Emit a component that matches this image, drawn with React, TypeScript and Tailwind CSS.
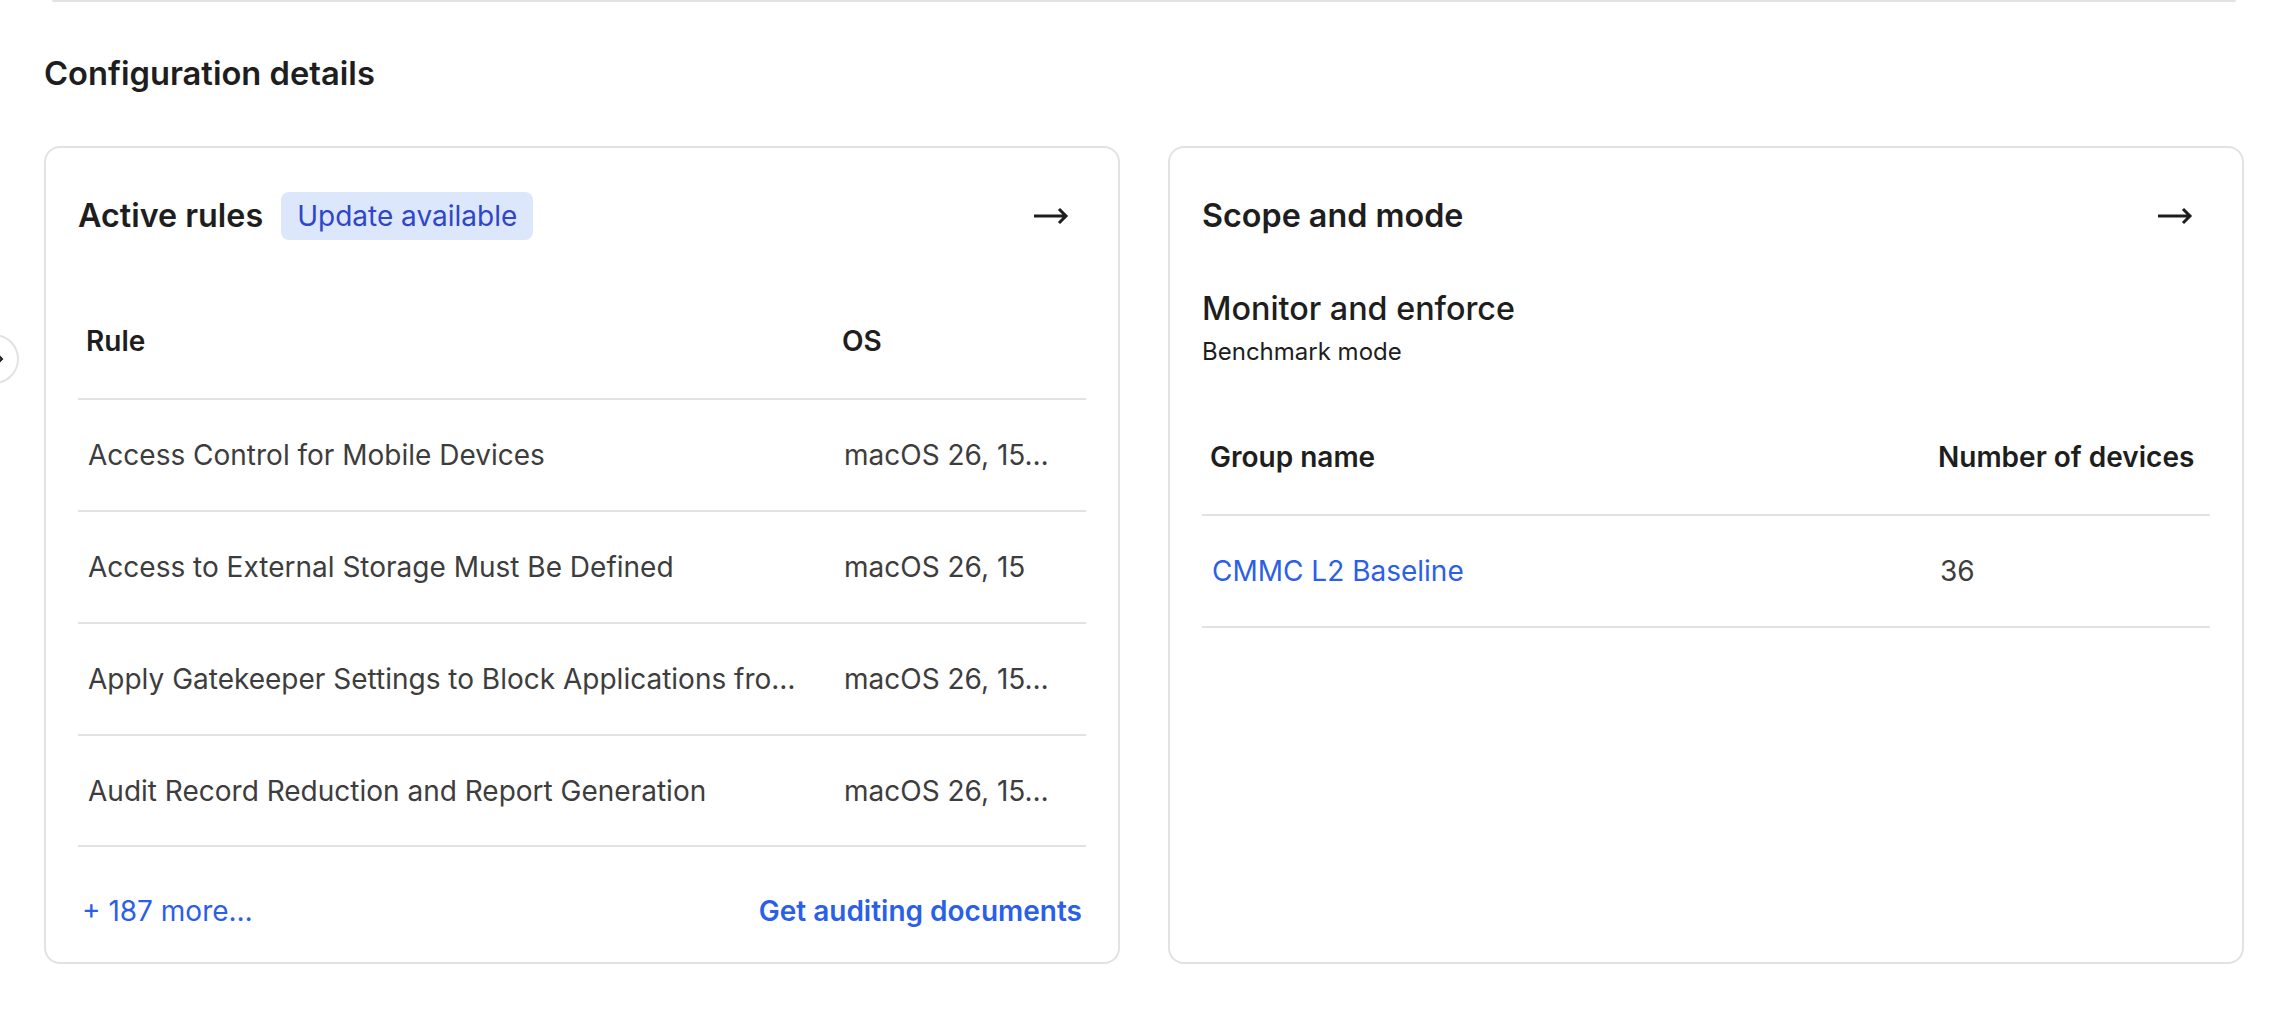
const rules = [
  { name: "Access Control for Mobile Devices", os: "macOS 26, 15…" },
  { name: "Access to External Storage Must Be Defined", os: "macOS 26, 15" },
  { name: "Apply Gatekeeper Settings to Block Applications fro…", os: "macOS 26, 15…" },
  { name: "Audit Record Reduction and Report Generation", os: "macOS 26, 15…" },
];

function ArrowRight() {
  return (
    <svg width="36" height="18" viewBox="0 0 36 18" fill="none" className="text-[#1e1e1e]">
      <path d="M1 9H33M26 2L33 9L26 16" stroke="currentColor" strokeWidth="3" />
    </svg>
  );
}

function CardHeader({ title, badge }: { title: string; badge?: string }) {
  return (
    <div className="flex h-[48px] items-center justify-between">
      <div className="flex items-center gap-[17px]">
        <h3 className="text-[32.3px] font-semibold text-[#1e1e1e]">{title}</h3>
        {badge && (
          <span className="ml-[1px] flex h-[48px] items-center rounded-[8px] bg-[#dde7fc] px-[16px] text-[28px] text-[#2f46c8]">
            {badge}
          </span>
        )}
      </div>
      <button className="mr-[17px] flex items-center">
        <ArrowRight />
      </button>
    </div>
  );
}

export default function App() {
  return (
    <div className="relative h-[1014px] w-[2282px] overflow-hidden bg-white font-['Inter',sans-serif]">
      <div className="ml-[52px] h-[2px] w-[2184px] rounded-b-[8px] bg-[#e2e2e2]" />

      {/* collapsed side nav toggle */}
      <button className="absolute left-[-31px] top-[334px] flex h-[50px] w-[50px] items-center justify-center rounded-full border-2 border-[#e2e2e2] bg-white pl-[12px]">
        <svg width="8" height="12" viewBox="0 0 8 12" fill="none" className="shrink-0">
          <path d="M1 1L6 6L1 11" stroke="#1e1e1e" strokeWidth="2" />
        </svg>
      </button>

      <div className="px-[44px]">
        <h2 className="mt-[51px] h-[40px] text-[32.7px] font-semibold leading-[40px] text-[#1e1e1e]">
          Configuration details
        </h2>

        <div className="mt-[53px] grid grid-cols-[1076px_1076px] gap-[48px]">
          {/* Active rules */}
          <section className="flex h-[818px] flex-col rounded-[16px] border-2 border-[#e2e2e2] px-[32px] pt-[44px]">
            <CardHeader title="Active rules" badge="Update available" />
            <table className="mt-[47px] w-full table-fixed border-collapse">
              <thead>
                <tr className="h-[112px] border-b-2 border-[#e2e2e2] text-left text-[28px] text-[#1e1e1e]">
                  <th className="w-[755px] pb-[3px] pl-[8px] font-semibold">Rule</th>
                  <th className="pb-[3px] pl-[9px] font-semibold">OS</th>
                </tr>
              </thead>
              <tbody>
                {rules.map((r, i) => (
                  <tr
                    key={r.name}
                    className={`border-b-2 border-[#e2e2e2] text-[28px] text-[#3d3d3d] ${i === rules.length - 1 ? "h-[111px]" : "h-[112px]"}`}
                  >
                    <td className="whitespace-nowrap pl-[10px]">{r.name}</td>
                    <td className="whitespace-nowrap pl-[11px]">{r.os}</td>
                  </tr>
                ))}
              </tbody>
            </table>
            <div className="mt-[43px] flex items-center justify-between px-[4px] text-[28px] text-[#2b5fe8]">
              <a>+ 187 more…</a>
              <a className="font-semibold">Get auditing documents</a>
            </div>
          </section>

          {/* Scope and mode */}
          <section className="flex h-[818px] flex-col rounded-[16px] border-2 border-[#e2e2e2] px-[32px] pt-[44px]">
            <CardHeader title="Scope and mode" />
            <div className="mt-[49px] text-[32.3px] font-medium leading-[40px] text-[#1e1e1e]">Monitor and enforce</div>
            <div className="mt-[7px] text-[24px] leading-[32px] text-[#1e1e1e]">Benchmark mode</div>
            <table className="mt-[34px] w-full table-fixed border-collapse">
              <thead>
                <tr className="h-[113px] border-b-2 border-[#e2e2e2] text-left text-[28px] text-[#1e1e1e]">
                  <th className="w-[736px] pb-[3px] pl-[8px] font-semibold">Group name</th>
                  <th className="pb-[3px] font-semibold">Number of devices</th>
                </tr>
              </thead>
              <tbody>
                <tr className="h-[112px] border-b-2 border-[#e2e2e2] text-[28px]">
                  <td className="pl-[10px] text-[#2b5fe8]">CMMC L2 Baseline</td>
                  <td className="pl-[2px] text-[#3d3d3d]">36</td>
                </tr>
              </tbody>
            </table>
          </section>
        </div>
      </div>
    </div>
  );
}
